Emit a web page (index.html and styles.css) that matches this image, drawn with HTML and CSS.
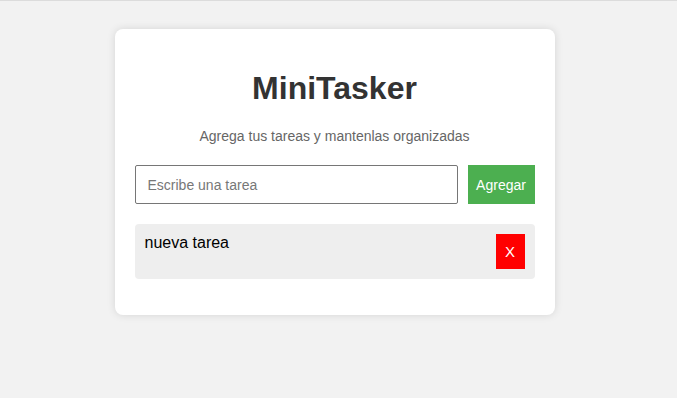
FILE: index.html
```html
<!DOCTYPE html>
<html lang="es">
<head>
  <meta charset="UTF-8">
  <meta name="viewport" content="width=device-width, initial-scale=1.0">
  <title>MiniTasker</title>
  <link rel="stylesheet" href="styles.css">
</head>
<body>
  <div class="container">
    <h1>MiniTasker</h1>
    <p class="subtitle">Agrega tus tareas y mantenlas organizadas</p>
    <form class="task-form" onsubmit="return false;">
      <input type="text" id="taskInput" placeholder="Escribe una tarea">
      <button type="submit" class="add-btn">Agregar</button>
    </form>
    <ul id="taskList" class="task-list">
      <li class="task">
        <span>nueva tarea</span>
        <button class="delete-btn">X</button>
      </li>
    </ul>
  </div>
</body>
</html>
```

FILE: styles.css
```css
body {
  font-family: "Liberation Sans", Arial, sans-serif;
  background-color: #f2f2f2;
  margin: 0;
  border-top: 1px solid #dcdcdc;
  padding-top: 28px;
  height: 100vh;
  box-sizing: border-box;
}
.container {
  background: white;
  width: 400px;
  margin: 0 auto;
  padding: 20px;
  border-radius: 8px;
  box-shadow: 0 0 8px rgba(0,0,0,0.12);
  position: relative;
  left: -4px;
}
h1 {
  text-align: center;
  color: #333;
  font-size: 32px;
  margin: 21px 0;
}
.subtitle {
  text-align: center;
  color: #666;
  font-size: 14px;
  margin: 0 0 21px;
}
.task-form {
  display: flex;
  gap: 10px;
  margin: 0 0 20px;
}
.task-form input {
  flex: 1;
  height: 39px;
  box-sizing: border-box;
  padding: 0 12px;
  font-family: inherit;
  font-size: 14px;
  border: 1px solid #767676;
  border-radius: 2px;
}
.task-form input::placeholder {
  color: #777;
}
.add-btn {
  background: #4caf50;
  color: white;
  border: none;
  width: 67px;
  padding: 0;
  height: 39px;
  font-family: inherit;
  font-size: 14px;
  cursor: pointer;
}
.task-list {
  list-style: none;
  padding: 0;
  margin: 0 0 16px;
}
.task {
  background: #eee;
  border-radius: 4px;
  padding: 10px;
  display: flex;
  justify-content: space-between;
  font-size: 16px;
}
.delete-btn {
  background: red;
  color: white;
  border: none;
  width: 29px;
  height: 35px;
  font-family: inherit;
  font-size: 15px;
  padding: 0;
  cursor: pointer;
}
```
